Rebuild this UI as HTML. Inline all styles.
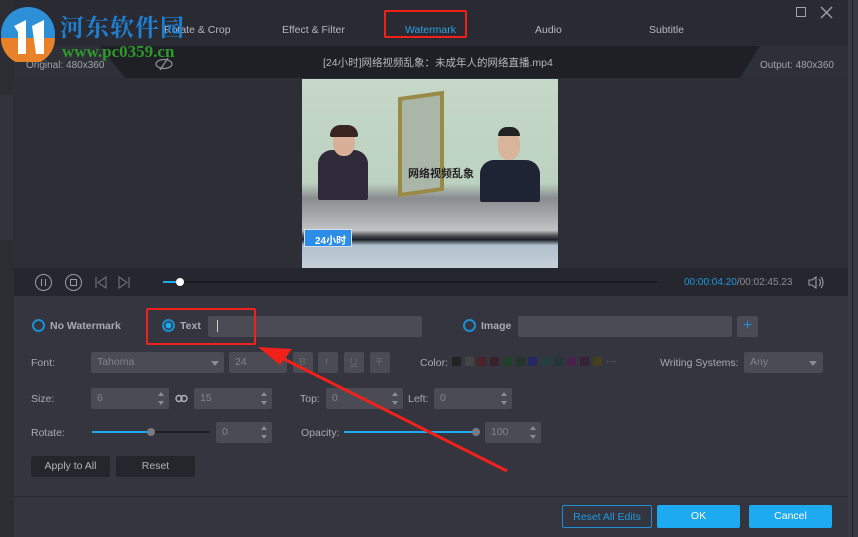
<!DOCTYPE html>
<html><head><meta charset="utf-8"><style>
*{margin:0;padding:0;box-sizing:border-box}
body{width:858px;height:537px;overflow:hidden;background:#2a2b32;font-family:"Liberation Sans","Noto Sans CJK SC",sans-serif;position:relative;color:#aeb0b8;font-size:11px}
.a{position:absolute;white-space:nowrap}
.lbl{position:absolute;font-size:10.5px;color:#a9abb3}
.inp{position:absolute;background:#4a4b55;border-radius:2px;height:21px;color:#80828a;font-size:10.5px;padding:4px 0 0 6px}
.spin::after{content:"";position:absolute;right:5px;top:4px;border:3px solid transparent;border-bottom:4px solid #8a8c94;border-top:none}
.spin::before{content:"";position:absolute;right:5px;bottom:4px;border:3px solid transparent;border-top:4px solid #8a8c94;border-bottom:none}
.btn{position:absolute;font-size:10.5px;text-align:center;border-radius:2px}
.radio{position:absolute;width:13px;height:13px;border:2px solid #1a8fd0;border-radius:50%}
.sw{position:absolute;top:357px;width:9px;height:9px}
</style></head><body>
<div class="a" style="left:0;top:0;width:14px;height:537px;background:#2c2d33"></div>
<div class="a" style="left:0;top:95px;width:13px;height:145px;background:#33343b"></div>
<div class="a" style="left:14px;top:3px;width:834px;height:534px;background:#2d2e36"></div>
<div class="a" style="left:848px;top:0;width:10px;height:537px;background:#383942"></div>
<div class="a" style="left:852px;top:0;width:1px;height:537px;background:#1e1f24"></div>
<div class="a" style="left:14px;top:3px;width:834px;height:43px;background:#2a2b32"></div>
<div class="a" style="left:164px;top:24px;font-size:10.5px;color:#b5b7be">Rotate &amp; Crop</div>
<div class="a" style="left:282px;top:24px;font-size:10.5px;color:#b5b7be">Effect &amp; Filter</div>
<div class="a" style="left:405px;top:24px;font-size:10.5px;color:#2ba3e6">Watermark</div>
<div class="a" style="left:535px;top:24px;font-size:10.5px;color:#b5b7be">Audio</div>
<div class="a" style="left:649px;top:24px;font-size:10.5px;color:#b5b7be">Subtitle</div>
<div class="a" style="left:384px;top:10px;width:83px;height:28px;border:2px solid #f0201a;border-radius:2px"></div>
<div class="a" style="left:796px;top:7px;width:10px;height:10px;border:1.5px solid #a0a2aa"></div>
<svg class="a" style="left:820px;top:6px" width="13" height="13"><path d="M1 1L12 12M12 1L1 12" stroke="#a0a2aa" stroke-width="1.4"/></svg>
<div class="a" style="left:14px;top:46px;width:834px;height:32px;background:#2e3038"></div>
<div class="a" style="left:100px;top:46px;width:324px;height:32px;background:#1f2026;clip-path:polygon(0 0,100% 0,100% 100%,25px 100%)"></div>
<div class="a" style="left:400px;top:46px;width:440px;height:32px;background:#1f2026;clip-path:polygon(0 0,360px 0,340px 100%,0 100%)"></div>
<div class="a" style="left:323px;top:55px;font-size:10.5px;color:#b5b7be">[24小时]网络视频乱象：未成年人的网络直播.mp4</div>
<div class="a" style="left:26px;top:60px;font-size:10px;color:#a0a2aa">Original: 480x360</div>
<div class="a" style="left:760px;top:60px;font-size:10px;color:#a0a2aa">Output: 480x360</div>
<svg class="a" style="left:154px;top:57px" width="20" height="14"><ellipse cx="10" cy="7" rx="8" ry="4.5" fill="none" stroke="#8a8c94" stroke-width="1.3"/><path d="M14 1L6 13" stroke="#8a8c94" stroke-width="1.3"/></svg>
<svg class="a" style="left:0;top:4px" width="58" height="58"><circle cx="28" cy="30" r="27" fill="#2d8fd6"/><path d="M1 34A27 27 0 0 0 55 34Z" fill="#e8822a"/><path d="M14 22L26 16L26 50L18 50L18 28Z M32 22L44 16L44 50L36 50Z" fill="#fff"/></svg>
<div class="a" style="left:60px;top:8px;font-size:24px;font-weight:bold;color:#1e7ed0;font-family:'Noto Serif CJK SC',serif;letter-spacing:1px">河东软件园</div>
<div class="a" style="left:62px;top:42px;font-size:17px;font-weight:bold;color:#2e9a2a;font-family:'Liberation Serif',serif">www.pc0359.cn</div>
<div class="a" style="left:302px;top:79px;width:256px;height:189px;background:linear-gradient(#c6d8c8 0%,#bcd2c0 55%,#8a8d90 63%,#a9abaf 73%,#c2c3c4 80%,#4a4d52 83%,#1d2026 85%,#b0c0cc 88%,#c6d0d8 100%)"></div>
<div class="a" style="left:398px;top:94px;width:46px;height:100px;border:4px solid #9a8a48;background:#aab6a8;transform:skewY(-8deg)"></div>
<div class="a" style="left:318px;top:150px;width:50px;height:50px;background:#2e2a3a;border-radius:14px 14px 2px 2px"></div>
<div class="a" style="left:333px;top:128px;width:22px;height:28px;background:#d8b098;border-radius:45%"></div>
<div class="a" style="left:330px;top:125px;width:28px;height:12px;background:#3a2420;border-radius:12px 12px 2px 2px"></div>
<div class="a" style="left:480px;top:160px;width:60px;height:42px;background:#1e2434;border-radius:14px 14px 2px 2px"></div>
<div class="a" style="left:498px;top:130px;width:22px;height:30px;background:#d8b49a;border-radius:45%"></div>
<div class="a" style="left:498px;top:127px;width:22px;height:9px;background:#222;border-radius:10px 10px 0 0"></div>
<div class="a" style="left:408px;top:165px;font-size:11px;font-weight:bold;color:#222">网络视频乱象</div>
<div class="a" style="left:304px;top:229px;width:48px;height:18px;background:#2a8ee8;color:#fff;font-size:10px;font-weight:bold;padding:2px 0 0 10px;border:1px solid #dde">24小时</div>
<div class="a" style="left:14px;top:268px;width:834px;height:28px;background:#26272e"></div>
<div class="a" style="left:35px;top:274px;width:17px;height:17px;border:1.3px solid #9a9ca4;border-radius:50%"></div>
<div class="a" style="left:41px;top:279px;width:5px;height:7px;border-left:1.3px solid #9a9ca4;border-right:1.3px solid #9a9ca4"></div>
<div class="a" style="left:65px;top:274px;width:17px;height:17px;border:1.3px solid #9a9ca4;border-radius:50%"></div>
<div class="a" style="left:70px;top:279px;width:7px;height:7px;border:1.3px solid #9a9ca4"></div>
<svg class="a" style="left:95px;top:276px" width="40" height="13"><path d="M1 1V12M11 1L3 6.5L11 12Z M24 1L32 6.5L24 12Z M34 1V12" fill="none" stroke="#6a6c74" stroke-width="1.2"/></svg>
<div class="a" style="left:163px;top:281px;width:494px;height:2px;background:#1a1b20"></div>
<div class="a" style="left:163px;top:281px;width:18px;height:2px;background:#1eaaf0"></div>
<div class="a" style="left:176px;top:278px;width:8px;height:8px;border-radius:50%;background:#fff"></div>
<div class="a" style="left:684px;top:277px;font-size:10px;color:#8a8c94"><span style="color:#1e9ae0">00:00:04.20</span>/00:02:45.23</div>
<svg class="a" style="left:808px;top:276px" width="16" height="13"><path d="M1 4H4L8 1V12L4 9H1Z M11 3Q14 6.5 11 10 M13 1Q17 6.5 13 12" fill="none" stroke="#9a9ca4" stroke-width="1.1"/></svg>
<div class="a" style="left:14px;top:296px;width:834px;height:241px;background:#34353f"></div>
<div class="radio" style="left:32px;top:319px"></div>
<div class="a" style="left:50px;top:320px;font-size:10.5px;font-weight:bold;color:#a9abb3">No Watermark</div>
<div class="radio" style="left:162px;top:319px;background:#1eaaf0;box-shadow:inset 0 0 0 1.5px #34353f"></div>
<div class="a" style="left:180px;top:320px;font-size:10.5px;font-weight:bold;color:#a9abb3">Text</div>
<div class="inp" style="left:208px;top:316px;width:214px;height:21px"><span style="display:inline-block;width:1px;height:12px;background:#ccc;margin-left:3px"></span></div>
<div class="a" style="left:146px;top:308px;width:110px;height:37px;border:2px solid #f0201a;border-radius:2px"></div>
<div class="radio" style="left:463px;top:319px"></div>
<div class="a" style="left:481px;top:320px;font-size:10.5px;font-weight:bold;color:#a9abb3">Image</div>
<div class="inp" style="left:518px;top:316px;width:214px"></div>
<div class="inp" style="left:737px;top:316px;width:21px;padding:0;color:#1e8ed0;font-size:16px;text-align:center;line-height:20px">+</div>
<div class="lbl" style="left:31px;top:357px">Font:</div>
<div class="inp" style="left:91px;top:352px;width:133px">Tahoma</div>
<div class="a" style="left:211px;top:361px;border:4px solid transparent;border-top:5px solid #8a8c94"></div>
<div class="inp" style="left:229px;top:352px;width:58px">24</div>
<div class="inp" style="left:293px;top:352px;width:20px;padding:4px 0 0 6px;color:#666">B</div>
<div class="inp" style="left:318px;top:352px;width:20px;padding:4px 0 0 7px;color:#666;font-style:italic">I</div>
<div class="inp" style="left:344px;top:352px;width:20px;padding:4px 0 0 6px;color:#666;text-decoration:underline">U</div>
<div class="inp" style="left:370px;top:352px;width:20px;padding:4px 0 0 6px;color:#666;text-decoration:line-through">T</div>
<div class="lbl" style="left:420px;top:357px">Color:</div>
<div class="sw" style="left:452px;background:#222"></div>
<div class="sw" style="left:465px;background:#444"></div>
<div class="sw" style="left:477px;background:#4a2228"></div>
<div class="sw" style="left:490px;background:#3a2228"></div>
<div class="sw" style="left:503px;background:#224028"></div>
<div class="sw" style="left:516px;background:#22362a"></div>
<div class="sw" style="left:528px;background:#252860"></div>
<div class="sw" style="left:541px;background:#224040"></div>
<div class="sw" style="left:554px;background:#223838"></div>
<div class="sw" style="left:567px;background:#48224a"></div>
<div class="sw" style="left:580px;background:#38223a"></div>
<div class="sw" style="left:593px;background:#44401e"></div>
<div class="lbl" style="left:606px;top:355px;color:#777">···</div>
<div class="lbl" style="left:660px;top:357px">Writing Systems:</div>
<div class="inp" style="left:744px;top:352px;width:79px">Any</div>
<div class="a" style="left:809px;top:361px;border:4px solid transparent;border-top:5px solid #8a8c94"></div>
<div class="lbl" style="left:31px;top:393px">Size:</div>
<div class="inp spin" style="left:91px;top:388px;width:78px">6</div>
<svg class="a" style="left:175px;top:394px" width="13" height="9"><rect x="1" y="1.5" width="6" height="6" rx="3" fill="none" stroke="#b0b2ba" stroke-width="1.4"/><rect x="6" y="1.5" width="6" height="6" rx="3" fill="none" stroke="#b0b2ba" stroke-width="1.4"/></svg>
<div class="inp spin" style="left:194px;top:388px;width:78px">15</div>
<div class="lbl" style="left:300px;top:393px">Top:</div>
<div class="inp spin" style="left:326px;top:388px;width:77px">0</div>
<div class="lbl" style="left:408px;top:393px">Left:</div>
<div class="inp spin" style="left:434px;top:388px;width:78px">0</div>
<div class="lbl" style="left:31px;top:427px">Rotate:</div>
<div class="a" style="left:92px;top:431px;width:118px;height:2px;background:#1f2026"></div>
<div class="a" style="left:92px;top:431px;width:60px;height:2px;background:#1eaaf0"></div>
<div class="a" style="left:147px;top:428px;width:8px;height:8px;border-radius:50%;background:#7a7c84"></div>
<div class="inp spin" style="left:216px;top:422px;width:56px">0</div>
<div class="lbl" style="left:301px;top:427px">Opacity:</div>
<div class="a" style="left:344px;top:431px;width:133px;height:2px;background:#1eaaf0"></div>
<div class="a" style="left:472px;top:428px;width:8px;height:8px;border-radius:50%;background:#7a7c84"></div>
<div class="inp spin" style="left:485px;top:422px;width:56px">100</div>
<div class="btn" style="left:31px;top:456px;width:79px;height:21px;background:#25262c;color:#b0b2ba;padding-top:4px">Apply to All</div>
<div class="btn" style="left:116px;top:456px;width:79px;height:21px;background:#25262c;color:#b0b2ba;padding-top:4px">Reset</div>
<div class="a" style="left:14px;top:496px;width:834px;height:1px;background:#292a31"></div>
<div class="btn" style="left:562px;top:505px;width:90px;height:23px;border:1px solid #1e8ed0;color:#1e9ae0;padding-top:5px">Reset All Edits</div>
<div class="btn" style="left:657px;top:505px;width:83px;height:23px;background:#1eaaf0;color:#fff;padding-top:5px">OK</div>
<div class="btn" style="left:749px;top:505px;width:83px;height:23px;background:#1eaaf0;color:#fff;padding-top:5px">Cancel</div>
<svg class="a" style="left:0;top:0" width="858" height="537"><path d="M507 471L272 353" stroke="#f0201a" stroke-width="3"/><path d="M258 347L292 349L280 365Z" fill="#f0201a"/></svg>
</body></html>
